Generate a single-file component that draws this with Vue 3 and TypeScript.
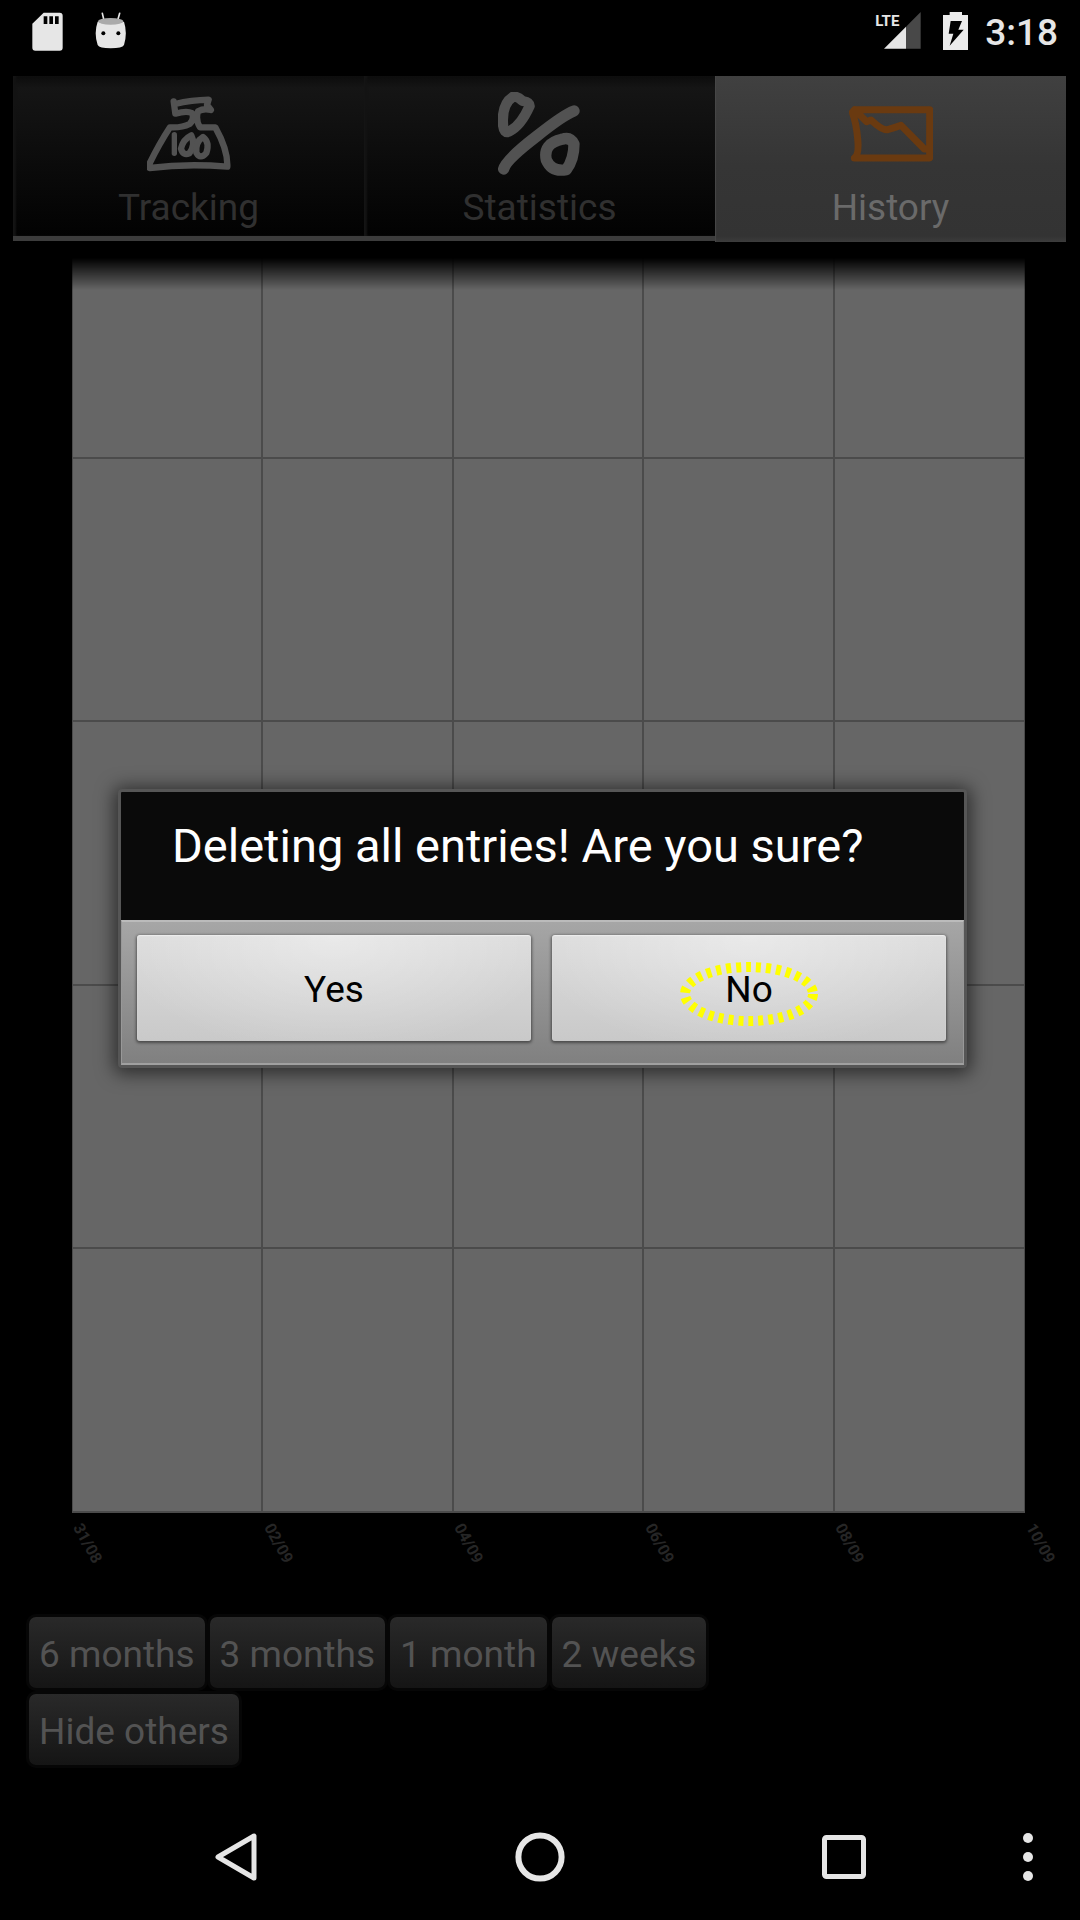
<script setup lang="ts">
import { ref } from 'vue'

type TabId = 'tracking' | 'statistics' | 'history'

const tabs: { id: TabId; label: string }[] = [
  { id: 'tracking', label: 'Tracking' },
  { id: 'statistics', label: 'Statistics' },
  { id: 'history', label: 'History' },
]
const activeTab = ref<TabId>('history')

const dates: string[] = ['31/08', '02/09', '04/09', '06/09', '08/09', '10/09']
const ranges: string[] = ['6 months', '3 months', '1 month', '2 weeks']
</script>

<template>
  <div class="screen">
    <header class="status">
      <div class="status-group notices">
        <svg width="31" height="39" viewBox="96 36 93 117" aria-hidden="true">
          <path fill="#e6e6e6" fill-rule="evenodd" d="M131 38H179Q188 38 188 47V143Q188 152 179 152H106Q97 152 97 143V71ZM131 49V72H142V49ZM148 49V72H159V49ZM165 49V72H176V49Z" />
        </svg>
        <svg width="32" height="37" viewBox="284 31 96 111" aria-hidden="true">
          <path d="M306 35L311 56M358 35L352 56" stroke="#e6e6e6" stroke-width="5" stroke-linecap="round" />
          <path fill="#e6e6e6" d="M292 60Q331 72 371 60Q382 94 371 130Q366 140 331 140Q297 140 292 130Q280 94 292 60Z" />
          <ellipse cx="331" cy="59" rx="38" ry="10" fill="#aaa" />
          <circle cx="309" cy="95" r="6" fill="#000" />
          <circle cx="354" cy="95" r="6" fill="#000" />
        </svg>
      </div>
      <div class="status-group">
        <div class="network">
          <span class="lte">LTE</span>
          <svg width="37" height="37" viewBox="134 39 111 111" aria-hidden="true">
            <path fill="#484848" d="M244 39V149H200V83Z" />
            <path fill="#e6e6e6" d="M200 83V149H134Z" />
          </svg>
        </div>
        <svg class="battery" width="25" height="38" viewBox="309 36 75 114" aria-hidden="true">
          <path fill="#ebebeb" d="M329 36H366V45H384V150H309V45H329Z" />
          <path fill="#000" d="M332 63H366L355 89H371L329 137L340 101H326Z" />
        </svg>
        <span class="clock">3:18</span>
      </div>
    </header>

    <main class="content">
      <nav class="tabs" aria-label="Sections">
        <button
          v-for="tab in tabs"
          :key="tab.id"
          type="button"
          class="tab"
          :class="{ active: tab.id === activeTab }"
          @click="activeTab = tab.id"
        >
          <svg v-if="tab.id === 'tracking'" class="tab-icon" viewBox="441 276 252 252" aria-hidden="true">
            <g fill="none" stroke="#525252" stroke-width="19" stroke-linecap="round" stroke-linejoin="round">
              <path d="M521 304L526 341Q560 331 576 339Q584 357 569 372Q545 384 510 382Q478 431 449 490V504Q560 490 682 500Q684 450 646 382H600Q586 360 594 334Q612 324 633 330L621 315L626 299Q575 300 525 312" />
              <path d="M523 404V460" stroke-width="16" />
              <path d="M574 406Q549 418 543 446Q549 468 568 460Q588 433 574 406Z" />
              <path d="M609 411Q586 425 589 458Q601 480 619 459Q630 427 609 411Z" />
            </g>
          </svg>
          <svg v-else-if="tab.id === 'statistics'" class="tab-icon" viewBox="414 96 252 252" aria-hidden="true">
            <g fill="none" stroke="#525252" stroke-linecap="round" stroke-linejoin="round">
              <path stroke-width="31" d="M458 111Q425 132 429 193Q431 222 448 214Q482 198 509 138Q509 126 488 123Q470 107 458 111Z" />
              <path stroke-width="34" d="M642 153Q610 165 531 228Q437 300 431 327" />
              <path stroke-width="34" d="M606 238Q548 251 559 300Q575 337 619 329Q642 298 642 252Q630 229 606 238Z" />
            </g>
          </svg>
          <svg v-else class="tab-icon" viewBox="447 96 252 252" aria-hidden="true">
            <path fill="none" stroke="#6a3a10" stroke-width="21" stroke-linecap="round" stroke-linejoin="round" d="M464 149H689V294H463Q478 284 473 236Q469 190 457 157L464 149L500 185L513 180Q545 211 563 209Q580 204 603 196L673 267H686" />
          </svg>
          <span>{{ tab.label }}</span>
        </button>
      </nav>

      <section class="chart" aria-label="Weight history">
        <div class="plot">
          <i v-for="n in 25" :key="n" class="cell"></i>
        </div>
        <div class="axis">
          <span v-for="date in dates" :key="date" class="tick"><span class="tick-label">{{ date }}</span></span>
        </div>
      </section>

      <section class="filters">
        <div class="filter-row">
          <button v-for="range in ranges" :key="range" type="button" class="chip">{{ range }}</button>
        </div>
        <div class="filter-row">
          <button type="button" class="chip">Hide others</button>
        </div>
      </section>
    </main>

    <footer class="navbar">
      <button type="button" class="nav-button back" aria-label="Back">
        <svg width="44" height="52" viewBox="0 0 44 52"><path d="M40 5V47L4 26Z" fill="none" stroke="#e6e6e6" stroke-width="5" stroke-linejoin="round" /></svg>
      </button>
      <button type="button" class="nav-button" aria-label="Home">
        <svg width="52" height="52" viewBox="0 0 52 52"><circle cx="26" cy="26" r="21.6" fill="none" stroke="#e6e6e6" stroke-width="6" /></svg>
      </button>
      <button type="button" class="nav-button" aria-label="Recent apps">
        <svg width="52" height="52" viewBox="0 0 52 52"><rect x="6.5" y="6.5" width="39" height="39" rx="2" fill="none" stroke="#e6e6e6" stroke-width="5" /></svg>
      </button>
      <button type="button" class="nav-button more" aria-label="More options">
        <svg width="12" height="52" viewBox="0 0 12 52" fill="#e6e6e6"><circle cx="6" cy="7" r="5" /><circle cx="6" cy="26" r="5" /><circle cx="6" cy="45" r="5" /></svg>
      </button>
    </footer>

    <div class="overlay">
      <div class="dialog" role="alertdialog" aria-modal="true" aria-labelledby="dialog-title">
        <p id="dialog-title" class="message">Deleting all entries! Are you sure?</p>
        <div class="actions">
          <button type="button" class="action">Yes</button>
          <button type="button" class="action">
            No
            <svg class="marker" width="140" height="66" viewBox="0 0 140 66" aria-hidden="true">
              <ellipse cx="70" cy="33" rx="64" ry="27" fill="none" stroke="#ff0" stroke-width="10" stroke-dasharray="5 5" />
            </svg>
          </button>
        </div>
      </div>
    </div>
  </div>
</template>

<style>
body {
  margin: 0;
  background: #000;
}
</style>

<style scoped>
.screen {
  position: relative;
  display: flex;
  flex-direction: column;
  min-height: 100vh;
  background: #000;
  font-family: Roboto, "Noto Sans", sans-serif;
  font-size: 37px;
}

button {
  margin: 0;
  padding: 0;
  border: 0;
  background: none;
  font: inherit;
  line-height: 44px;
}

svg {
  display: block;
}

.status {
  display: flex;
  justify-content: space-between;
  height: 64px;
  padding: 12px 22px 0 32px;
  box-sizing: border-box;
  margin-bottom: 12px;
  color: #e6e6e6;
}

.status-group {
  display: flex;
  align-items: flex-start;
}

.notices {
  gap: 32px;
}

.network {
  position: relative;
  padding-left: 9px;
}

.lte {
  position: absolute;
  left: 0;
  top: 0;
  font-size: 15px;
  line-height: 18px;
  font-weight: 700;
}

.battery {
  margin: 0 17px 0 22px;
}

.clock {
  line-height: 42px;
  font-weight: 500;
}

.content {
  flex: 1;
  display: flex;
  flex-direction: column;
}

.tabs {
  display: grid;
  grid-template-columns: repeat(3, 1fr);
  margin: 0 14px 0 13px;
}

.tab {
  display: flex;
  flex-direction: column;
  align-items: center;
  height: 165px;
  padding-top: 16px;
  border-bottom: 5px solid #3c3c3c;
  color: #303030;
  line-height: 64px;
  background: linear-gradient(#0c0c0c, #151515 12px, #0c0c0c 80px, #020202);
  box-shadow: inset 3px 0 2px #141414;
}

.tab.active {
  height: 166px;
  border-bottom: 0;
  color: #6a6a6a;
  background: linear-gradient(#404040, #353535 90px, #333 160px, #3c3c3c);
  box-shadow: inset 1px 0 1px #484848;
}

.tab-icon {
  width: 84px;
  height: 84px;
  flex: none;
}

.chart {
  flex: 1;
  display: flex;
  flex-direction: column;
  margin: 16px 55px 0 72px;
}

.plot {
  flex: 1;
  display: grid;
  grid-template-columns: repeat(5, 1fr);
  grid-template-rows: 201fr 263fr 264fr 263fr 264fr;
  border-left: 1px solid #4b4b4b;
  background: #666;
  -webkit-mask-image: linear-gradient(transparent, #000 32px);
  mask-image: linear-gradient(transparent, #000 32px);
}

.cell {
  border-right: 2px solid #4b4b4b;
  border-bottom: 2px solid #4b4b4b;
}

.cell:nth-child(5n) {
  border-right-width: 1px;
}

.axis {
  display: flex;
  justify-content: space-between;
  height: 104px;
  padding-top: 8px;
  box-sizing: border-box;
}

.tick {
  width: 0;
}

.tick-label {
  display: block;
  width: 48px;
  font-size: 16px;
  line-height: 16px;
  font-weight: 700;
  color: #262626;
  transform: translate(12px, 0) rotate(61deg);
  transform-origin: 0 0;
}

.filters {
  display: flex;
  flex-direction: column;
  gap: 6px;
  padding: 0 29px 11px;
}

.filter-row {
  display: flex;
  gap: 5px;
}

.chip {
  height: 71px;
  padding: 4px 10px 0;
  border-radius: 7px;
  color: #535353;
  background: linear-gradient(#292929, #151515);
  box-shadow: 0 0 0 3px #060606;
}

.navbar {
  display: grid;
  grid-template-columns: 84px repeat(3, 1fr) 84px;
  height: 144px;
  padding-top: 18px;
  box-sizing: border-box;
}

.nav-button {
  display: flex;
  justify-content: center;
  align-items: center;
  height: 126px;
}

.back {
  grid-column: 2;
}

.more {
  padding-right: 20px;
}

.overlay {
  position: absolute;
  inset: 0;
  display: flex;
  align-items: center;
  padding: 0 113px 64px 118px;
}

.dialog {
  flex: 1;
  border: 3px solid #565656;
  border-radius: 4px;
  background: #0a0a0a;
  box-shadow: 0 2px 18px 4px rgba(0, 0, 0, 0.55);
}

.message {
  margin: 0;
  padding: 25px 51px 45px;
  font-size: 47px;
  line-height: 58px;
  color: #fff;
}

.actions {
  display: grid;
  grid-template-columns: 1fr 1fr;
  gap: 21px;
  padding: 13px 17px 22px 15px;
  border: 2px solid #a0a0a0;
  border-color: #bbb #989898 #a0a0a0;
  border-width: 2px 1px;
  background: linear-gradient(#a6a6a6, #808080);
}

.action {
  position: relative;
  height: 106px;
  padding-top: 4px;
  border-radius: 3px;
  color: #000;
  background: radial-gradient(ellipse at 50% 0, rgba(255, 255, 255, 0.4), transparent 80%), linear-gradient(#dcdcdc, #c9c9c9);
  box-shadow: inset 0 1px 1px #eee, 0 1px 3px 1px rgba(0, 0, 0, 0.45);
}

.marker {
  position: absolute;
  top: 26px;
  left: 50%;
  margin-left: -70px;
}
</style>
